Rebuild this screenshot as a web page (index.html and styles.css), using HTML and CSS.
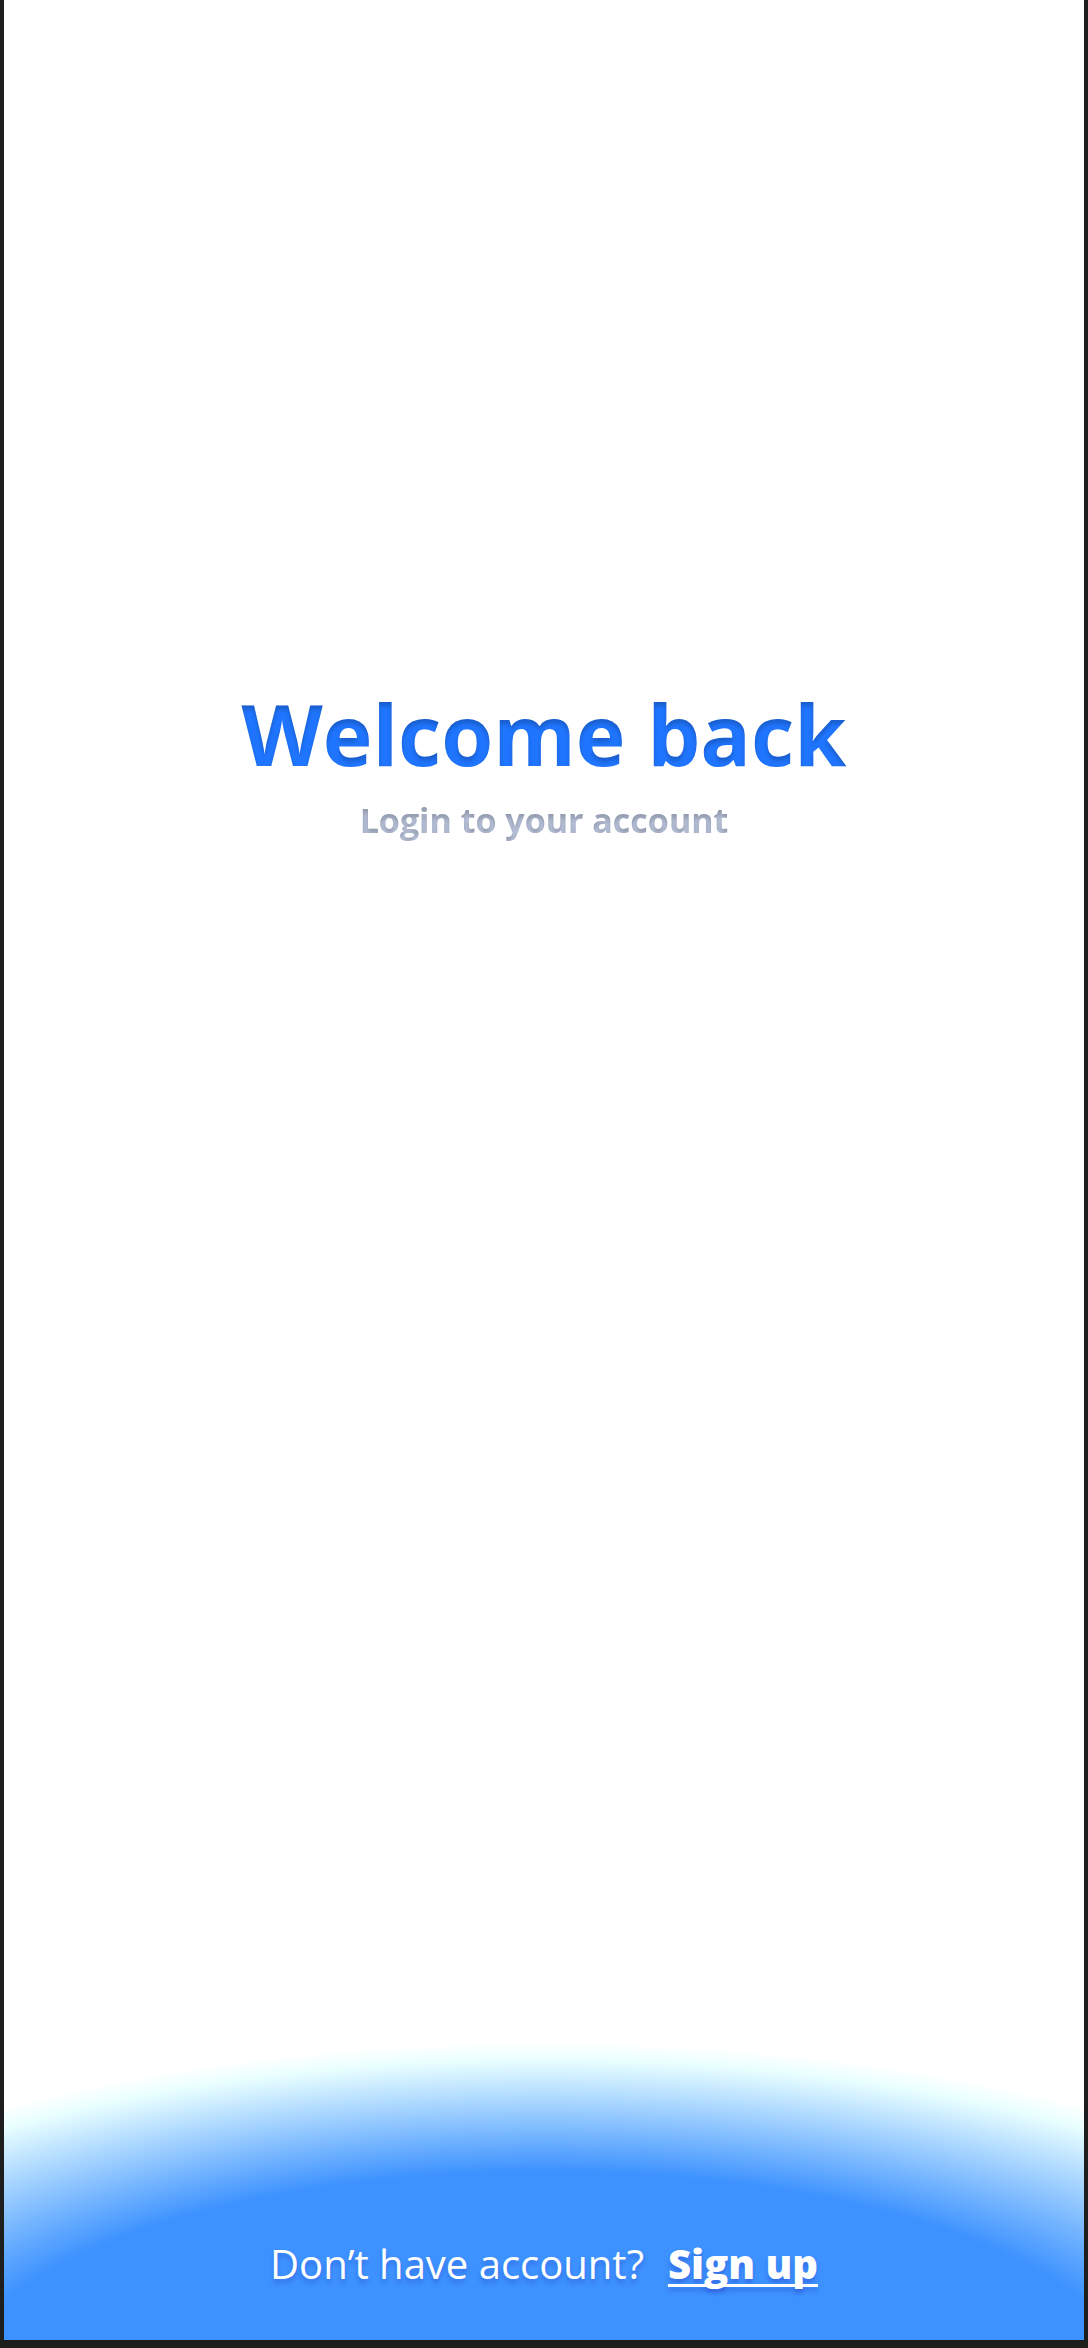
FILE: index.html
```html
<!DOCTYPE html>
<html lang="en">
<head>
<meta charset="utf-8">
<meta name="viewport" content="width=device-width, initial-scale=1">
<title>Welcome back</title>
<link rel="stylesheet" href="styles.css">
</head>
<body>
<svg class="defs" width="0" height="0" aria-hidden="true">
  <filter id="inner-shadow" color-interpolation-filters="sRGB">
    <feOffset in="SourceAlpha" dy="4" result="moved"/>
    <feGaussianBlur in="moved" stdDeviation="2" result="soft"/>
    <feComposite in="SourceAlpha" in2="soft" operator="out" result="edge"/>
    <feColorMatrix in="edge" type="matrix" values="0 0 0 0 0  0 0 0 0 0  0 0 0 0 0  0 0 0 0.2 0" result="shade"/>
    <feMerge>
      <feMergeNode in="SourceGraphic"/>
      <feMergeNode in="shade"/>
    </feMerge>
  </filter>
</svg>
<div class="screen">
  <main class="intro">
    <h1 class="title">Welcome back</h1>
    <p class="subtitle">Login to your account</p>
  </main>
  <footer class="footer">
    <p class="prompt">Don’t have account?</p>
    <a class="signup" href="#signup">Sign up</a>
  </footer>
</div>
</body>
</html>
```
FILE: styles.css
```css
* {
  box-sizing: border-box;
}

body {
  margin: 0;
  background: #1e1e1e;
  font-family: "Open Sans", "Noto Sans", sans-serif;
}

.defs {
  position: absolute;
}

.screen {
  display: flex;
  flex-direction: column;
  min-height: calc(100vh - 8px);
  margin: 0 4px 8px;
  background: #fff;
}

.intro {
  flex: 1;
  padding-top: 678px;
  text-align: center;
}

.title {
  margin: 0;
  color: #1f75ff;
  font-size: 84px;
  font-weight: 700;
  line-height: 112px;
  filter: url(#inner-shadow);
}

.subtitle {
  margin: 6px 0 0;
  color: #b8c2da;
  font-size: 34px;
  font-weight: 700;
  line-height: 48px;
  filter: url(#inner-shadow);
}

.footer {
  display: flex;
  justify-content: center;
  align-items: flex-end;
  gap: 24px;
  min-height: 320px;
  padding-bottom: 48px;
  background: radial-gradient(936px 350px at 50% calc(100% + 52px), #3d92ff 63%, #eaffff 95%, #fff 100%);
  color: #fff;
  font-size: 40px;
  line-height: 56px;
  text-shadow: 0 4px 4px rgba(40, 60, 200, 0.4);
}

.prompt {
  margin: 0;
  font-weight: 500;
}

.signup {
  color: inherit;
  font-weight: 800;
  text-decoration-thickness: 3px;
  text-underline-offset: 5px;
  text-decoration-skip-ink: none;
}
```
